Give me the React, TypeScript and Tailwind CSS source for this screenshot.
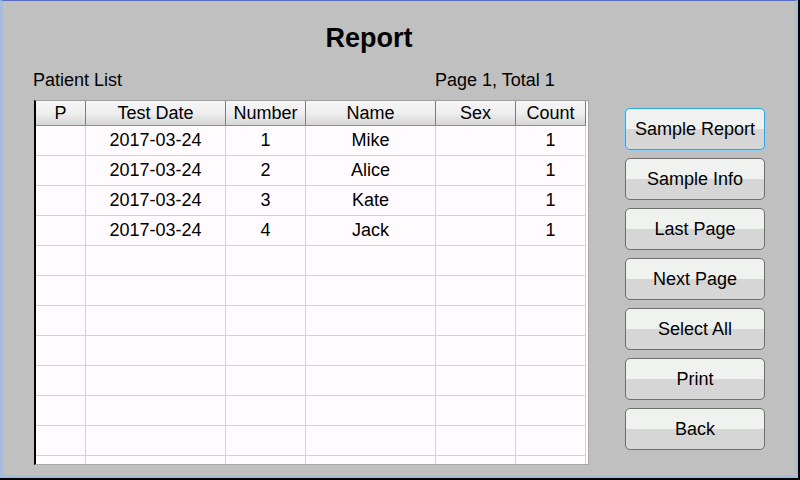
const COLUMNS = [
  { label: "P", width: "w-[50px]" },
  { label: "Test Date", width: "w-[140px]" },
  { label: "Number", width: "w-[80px]" },
  { label: "Name", width: "w-[130px]" },
  { label: "Sex", width: "w-[80px]" },
  { label: "Count", width: "w-[70px]" },
] as const;

const PATIENTS = [
  { date: "2017-03-24", number: "1", name: "Mike", sex: "", count: "1" },
  { date: "2017-03-24", number: "2", name: "Alice", sex: "", count: "1" },
  { date: "2017-03-24", number: "3", name: "Kate", sex: "", count: "1" },
  { date: "2017-03-24", number: "4", name: "Jack", sex: "", count: "1" },
];

const BUTTONS = ["Sample Report", "Sample Info", "Last Page", "Next Page", "Select All", "Print", "Back"];

const TOTAL_ROWS = 12;

function ReportTable() {
  const rows = Array.from({ length: TOTAL_ROWS }, (_, i) => {
    const p = PATIENTS[i];
    return p ? ["", p.date, p.number, p.name, p.sex, p.count] : ["", "", "", "", "", ""];
  });

  return (
    <div className="flex h-[365px] w-[555px] border-l-2 border-t border-r border-b border-l-black border-t-[#a0a0a0] border-r-[#a8a8a8] border-b-[#a8a8a8] bg-[#fffbff]">
      <div className="flex h-full flex-col overflow-hidden border-r-2 border-r-[#fffbff]">
        <div className="flex h-[25px] shrink-0 border-b border-[#8c8c8c] bg-gradient-to-b from-[#f6f6f6] via-[#eeeeee] to-[#d6d6d6]">
          {COLUMNS.map((col) => (
            <div
              key={col.label}
              className={`${col.width} flex items-center justify-center border-r border-[#7c7c7c] text-[18px] leading-none`}
            >
              {col.label}
            </div>
          ))}
        </div>
        {rows.map((cells, r) => (
          <div key={r} className="flex h-[30px] shrink-0 border-b border-[#d4d0d4]">
            {cells.map((cell, c) => (
              <div
                key={c}
                className={`${COLUMNS[c].width} flex items-center justify-center border-r border-[#d4d0d4] pb-[2px] text-[18px] leading-none`}
              >
                {cell}
              </div>
            ))}
          </div>
        ))}
      </div>
    </div>
  );
}

function SideButton({ label, focused }: { label: string; focused: boolean }) {
  return (
    <button
      className={`flex h-[42px] w-[140px] items-center justify-center rounded-[5px] border bg-gradient-to-b from-[#f0f2f0] from-50% to-[#d6d6d6] to-50% text-[18px] leading-none text-black ${
        focused ? "border-[#2ea6e6] shadow-[0_0_0_1px_#8fd0f4]" : "border-[#6e6e6e]"
      }`}
    >
      {label}
    </button>
  );
}

export default function App() {
  return (
    <div className="h-[480px] w-[800px] bg-black pb-[2px] pr-[2px]" style={{ fontFamily: '"Liberation Sans", Arial, sans-serif' }}>
      <div className="flex h-full w-full flex-col border-b-[3px] border-l-[3px] border-r-[3px] border-t border-b-[#a6bcd8] border-l-[#a6bcd8] border-r-[#a6bcd8] border-t-[#5a6ec4] bg-[#c0c0c0] text-black">
        <div className="pr-[60px] pt-[21px] text-center text-[27px] font-bold leading-[32px]">Report</div>
        <div className="mt-[16px] flex h-[20px] items-center pl-[30px] text-[18px] leading-none">
          <span className="w-[402px]">Patient List</span>
          <span>Page 1, Total 1</span>
        </div>
        <div className="mt-[10px] flex pl-[31px]">
          <ReportTable />
          <div className="ml-[36px] mt-[8px] flex flex-col gap-[8px]">
            {BUTTONS.map((b, i) => (
              <SideButton key={b} label={b} focused={i === 0} />
            ))}
          </div>
        </div>
      </div>
    </div>
  );
}
